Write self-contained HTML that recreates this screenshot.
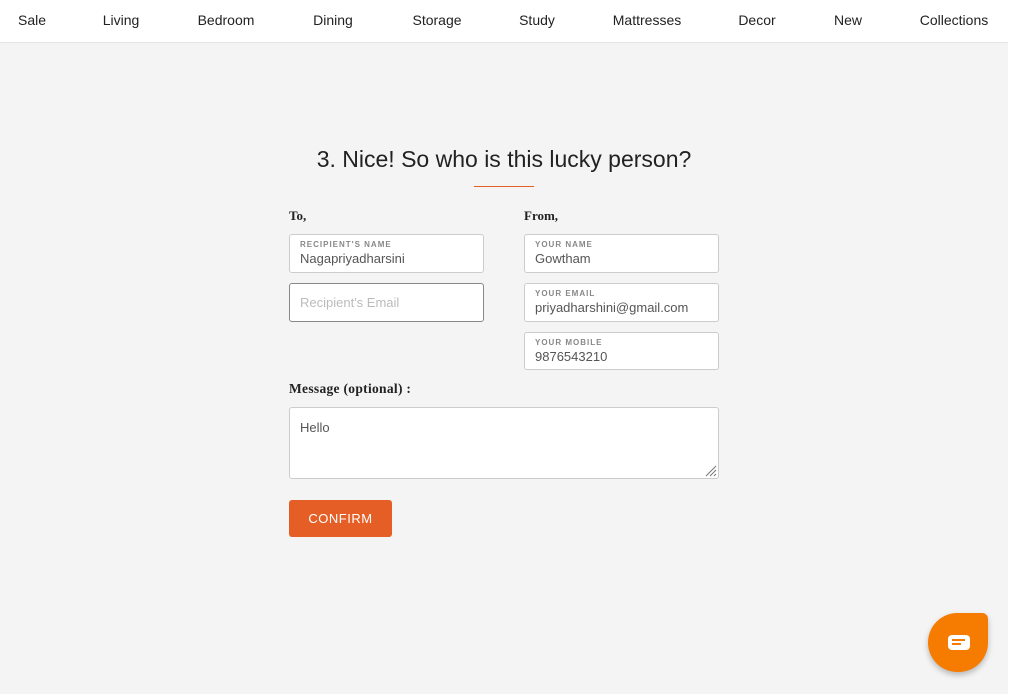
<!DOCTYPE html>
<html><head><meta charset="utf-8"><style>
*{box-sizing:border-box;margin:0;padding:0}
body{width:1024px;height:694px;background:#fff;font-family:"Liberation Sans",sans-serif;position:relative;overflow:hidden;color:#222}
.nav{position:absolute;left:0;top:0;width:1008px;height:43px;background:#fff;border-bottom:1px solid #e6e6e6}
.nav span{position:absolute;top:12px;transform:translateX(-50%);font-size:14px;color:#222;white-space:nowrap}
.main{position:absolute;left:0;top:43px;width:1008px;height:651px;background:#f4f4f4}
h1{position:absolute;top:146px;left:0;width:1008px;text-align:center;font-weight:normal;font-size:23px;color:#222}
.ul{position:absolute;left:474px;top:186px;width:60px;height:1px;background:#e55e26}
.lbl{position:absolute;font-family:"Liberation Serif",serif;font-weight:bold;font-size:13px;color:#222}
.box{position:absolute;width:195px;height:39px;background:#fff;border:1px solid #ccc;border-radius:3px}
.box .s{position:absolute;left:10px;top:5px;font-size:8px;letter-spacing:1px;color:#888;font-weight:bold}
.box .v{position:absolute;left:10px;top:16px;font-size:13px;color:#555}
.ph{position:absolute;left:10px;top:11px;font-size:13px;color:#bbb}
.btn{position:absolute;left:289px;top:500px;width:103px;height:37px;background:#e55e26;border-radius:3px;color:#fff;font-size:13px;text-align:center;line-height:37px;letter-spacing:.5px}
.chat{position:absolute;left:928px;top:613px;width:60px;height:59px;background:#f57c00;border-radius:30px 6px 30px 30px;box-shadow:0 3px 6px rgba(0,0,0,.25)}
</style></head><body>
<div class="nav">
<span style="left:32px">Sale</span><span style="left:121px">Living</span><span style="left:226px">Bedroom</span><span style="left:333px">Dining</span><span style="left:437px">Storage</span><span style="left:537px">Study</span><span style="left:647px">Mattresses</span><span style="left:757px">Decor</span><span style="left:848px">New</span><span style="left:954px">Collections</span>
</div>
<div class="main"></div>
<h1>3. Nice! So who is this lucky person?</h1>
<div class="ul"></div>
<div class="lbl" style="left:289px;top:208px">To,</div>
<div class="lbl" style="left:524px;top:208px">From,</div>
<div class="box" style="left:289px;top:234px"><div class="s">RECIPIENT'S NAME</div><div class="v">Nagapriyadharsini</div></div>
<div class="box" style="left:289px;top:283px;border-color:#888"><div class="ph">Recipient's Email</div></div>
<div class="box" style="left:524px;top:234px"><div class="s">YOUR NAME</div><div class="v">Gowtham</div></div>
<div class="box" style="left:524px;top:283px"><div class="s">YOUR EMAIL</div><div class="v">priyadharshini@gmail.com</div></div>
<div class="box" style="left:524px;top:332px;height:38px"><div class="s">YOUR MOBILE</div><div class="v">9876543210</div></div>
<div class="lbl" style="left:289px;top:381px;font-size:13.5px;letter-spacing:.3px">Message (optional) :</div>
<div class="box" style="left:289px;top:407px;width:430px;height:72px"><div class="ph" style="color:#555;top:12px">Hello</div>
<svg style="position:absolute;right:1px;bottom:1px" width="13" height="13"><path d="M12 2L2 12M12 6L6 12M12 10L10 12" stroke="#777" stroke-width="1"/></svg></div>
<div class="btn">CONFIRM</div>
<div class="chat"><svg style="position:absolute;left:19px;top:21px" width="24" height="17" viewBox="0 0 24 17"><rect x="1" y="1" width="22" height="15" rx="4" fill="#fff"/><rect x="5" y="5" width="13" height="2" fill="#f57c00"/><rect x="5" y="9" width="9" height="2" fill="#f57c00"/></svg></div>
</body></html>
